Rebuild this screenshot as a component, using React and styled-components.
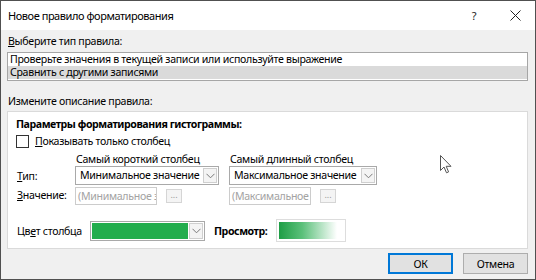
import React from "react";
import styled, { createGlobalStyle } from "styled-components";

const Global = createGlobalStyle`
  html, body { margin: 0; padding: 0; background: #ffffff; }
  body {
    font-family: "Noto Sans", "Open Sans", sans-serif;
    font-size: 10.6px;
    letter-spacing: -0.3px;
    color: #000;
  }
  * { box-sizing: border-box; }
`;

const Window = styled.div`
  position: relative;
  width: 536px;
  height: 280px;
  border: 1px solid #505050;
  background: #f0f0f0;
  display: flex;
  flex-direction: column;
  overflow: hidden;
`;

const TitleBar = styled.div`
  height: 29px;
  flex-shrink: 0;
  background: #ffffff;
  display: flex;
  align-items: center;
  padding-left: 7px;
`;

const Title = styled.div`
  flex: 1;
  line-height: 14px;
  font-size: 11px;
  letter-spacing: -0.45px;
`;

const TitleButton = styled.div`
  width: ${(p) => p.$w}px;
  height: 29px;
  display: flex;
  align-items: center;
  justify-content: center;
  color: #222;
  font-size: 11px;
`;

const Body = styled.div`
  display: flex;
  flex-direction: column;
  padding: 0 7px 0 6px;
`;

const SectionLabel = styled.div`
  margin: ${(p) => p.$mt}px 0 0 1px;
  height: 14px;
  line-height: 14px;
  white-space: nowrap;
`;

const ListBox = styled.div`
  margin-top: 4px;
  height: 29px;
  border: 1px solid #a6a6a6;
  background: #ffffff;
  padding: 0 0 1px 0;
  display: flex;
  flex-direction: column;
`;

const ListItem = styled.div`
  height: 13px;
  line-height: 13px;
  padding-left: 2px;
  white-space: nowrap;
  background: ${(p) => (p.$selected ? "#dadada" : "transparent")};
`;

const Panel = styled.div`
  margin-top: 3px;
  height: 138px;
  border: 1px solid #dadada;
  background: #ffffff;
  padding: 5px 0 0 8px;
  display: flex;
  flex-direction: column;
`;

const PanelHeader = styled.div`
  font-weight: 700;
  letter-spacing: -0.45px;
  line-height: 14px;
  height: 14px;
  white-space: nowrap;
`;

const CheckRow = styled.label`
  margin-top: 3px;
  display: flex;
  align-items: center;
  height: 14px;
  gap: 6px;
  line-height: 14px;
  white-space: nowrap;
`;

const CheckBox = styled.span`
  width: 13px;
  height: 13px;
  border: 1px solid #333333;
  background: #ffffff;
`;

const Grid = styled.div`
  margin-top: 5px;
  display: grid;
  grid-template-columns: 59px 154px 160px;
  grid-template-rows: 12px 19px 18px;
  row-gap: 1px;
  align-items: center;
`;

const ColHead = styled.div`
  line-height: 12px;
  padding-left: 1px;
  align-self: end;
  white-space: nowrap;
`;

const RowLabel = styled.div`
  padding-left: 1px;
  line-height: 14px;
  white-space: nowrap;
`;

const Accel = styled.span`
  text-decoration: underline;
`;

const Select = styled.div`
  width: ${(p) => p.$w}px;
  height: ${(p) => p.$h || 19}px;
  border: 1px solid #a9a9a9;
  background: #ffffff;
  display: flex;
  align-items: stretch;
  padding: 1px;
`;

const SelectText = styled.div`
  flex: 1;
  padding-left: 3px;
  line-height: 15px;
  white-space: nowrap;
  overflow: hidden;
`;

const ArrowBox = styled.div`
  width: 14px;
  border: 1px solid #cfcfcf;
  background: #f4f4f4;
  display: flex;
  align-items: center;
  justify-content: center;
`;

const ValueRow = styled.div`
  display: flex;
  align-items: center;
  gap: 9px;
  margin-top: 1px;
`;

const ValueInput = styled.div`
  width: 82px;
  height: 18px;
  border: 1px solid #cccccc;
  background: #ffffff;
  color: #a3a3a3;
  line-height: 16px;
  padding-left: 2px;
  white-space: nowrap;
  overflow: hidden;
`;

const DotsButton = styled.div`
  width: 16px;
  height: 14px;
  border: 1px solid #d5d5d5;
  background: #f4f4f4;
  color: #9a9a9a;
  font-size: 9px;
  line-height: 9px;
  letter-spacing: 0;
  text-align: center;
`;

const ColorRow = styled.div`
  margin-top: 15px;
  display: flex;
  align-items: center;
  height: 23px;
`;

const ColorLabel = styled.div`
  width: 74px;
  padding-left: 1px;
  line-height: 14px;
  white-space: nowrap;
`;

const Swatch = styled.div`
  flex: 1;
  background: #22ad4d;
  margin-right: 1px;
`;

const PreviewLabel = styled.div`
  font-weight: 700;
  letter-spacing: -0.45px;
  margin-left: 9px;
  width: 62px;
  line-height: 14px;
  white-space: nowrap;
`;

const Preview = styled.div`
  width: 70px;
  height: 23px;
  border: 1px solid #dddddd;
  padding: 2px 8px 2px 2px;
  background: #ffffff;
`;

const PreviewBar = styled.div`
  width: 100%;
  height: 100%;
  background: linear-gradient(to right, #1e9e45 0%, #5bc07a 40%, #ffffff 100%);
`;

const Footer = styled.div`
  margin-top: 4px;
  display: flex;
  justify-content: flex-end;
  gap: 10px;
`;

const Button = styled.div`
  width: 65px;
  height: 21px;
  background: #e1e1e1;
  border: ${(p) => (p.$default ? "2px solid #0078d7" : "1px solid #adadad")};
  display: flex;
  align-items: center;
  justify-content: center;
`;

const Cursor = styled.svg`
  position: absolute;
  left: 439px;
  top: 154px;
`;

const Chevron = () => (
  <svg width="9" height="6" viewBox="0 0 9 6">
    <path d="M0.5 0.8 L4.5 4.8 L8.5 0.8" fill="none" stroke="#7a7a7a" strokeWidth="1" />
  </svg>
);

export default function App() {
  return (
    <>
      <Global />
      <Window>
        <TitleBar>
          <Title>Новое правило форматирования</Title>
          <TitleButton $w={42}>?</TitleButton>
          <TitleButton $w={40}>
            <svg width="11" height="11" viewBox="0 0 11 11">
              <path d="M0.5 0.5 L10.5 10.5 M10.5 0.5 L0.5 10.5" stroke="#222" strokeWidth="1" />
            </svg>
          </TitleButton>
        </TitleBar>
        <Body>
          <SectionLabel $mt={4}>
            <Accel>В</Accel>ыберите тип правила:
          </SectionLabel>
          <ListBox>
            <ListItem>Проверьте значения в текущей записи или используйте выражение</ListItem>
            <ListItem $selected>Сравнить с другими записями</ListItem>
          </ListBox>
          <SectionLabel $mt={13}>Измените описание правила:</SectionLabel>
          <Panel>
            <PanelHeader>Параметры форматирования гистограммы:</PanelHeader>
            <CheckRow>
              <CheckBox />
              <span>
                <Accel>П</Accel>оказывать только столбец
              </span>
            </CheckRow>
            <Grid>
              <span />
              <ColHead>Самый короткий столбец</ColHead>
              <ColHead>Самый длинный столбец</ColHead>
              <RowLabel>
                <Accel>Т</Accel>ип:
              </RowLabel>
              <Select $w={144}>
                <SelectText>Минимальное значение</SelectText>
                <ArrowBox>
                  <Chevron />
                </ArrowBox>
              </Select>
              <Select $w={148}>
                <SelectText>Максимальное значение</SelectText>
                <ArrowBox>
                  <Chevron />
                </ArrowBox>
              </Select>
              <RowLabel>
                <Accel>З</Accel>начение:
              </RowLabel>
              <ValueRow>
                <ValueInput>(Минимальное значение)</ValueInput>
                <DotsButton>...</DotsButton>
              </ValueRow>
              <ValueRow>
                <ValueInput>(Максимальное значение)</ValueInput>
                <DotsButton>...</DotsButton>
              </ValueRow>
            </Grid>
            <ColorRow>
              <ColorLabel>
                Цв<Accel>е</Accel>т столбца
              </ColorLabel>
              <Select $w={115} $h={20}>
                <Swatch />
                <ArrowBox>
                  <Chevron />
                </ArrowBox>
              </Select>
              <PreviewLabel>Просмотр:</PreviewLabel>
              <Preview>
                <PreviewBar />
              </Preview>
            </ColorRow>
          </Panel>
          <Footer>
            <Button $default>ОК</Button>
            <Button>Отмена</Button>
          </Footer>
        </Body>
        <Cursor width="12" height="19" viewBox="0 0 12 19">
          <path
            d="M0.5 0.5 L0.5 15.5 L4 12 L6.5 17.8 L8.6 16.9 L6.2 11.3 L11 11.3 Z"
            fill="#ffffff"
            stroke="#555"
            strokeWidth="1"
          />
        </Cursor>
      </Window>
    </>
  );
}
